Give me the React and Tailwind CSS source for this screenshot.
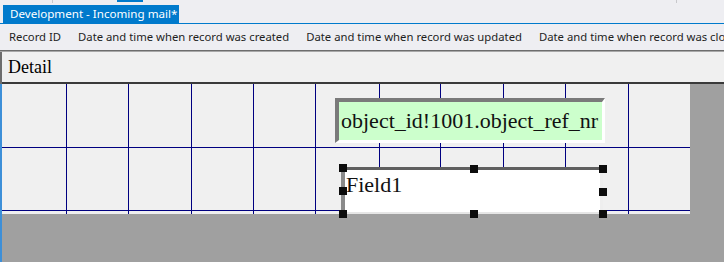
import React from 'react';

const ui = { fontFamily: '"Noto Sans", "Liberation Sans", Arial, sans-serif' };
const serif = { fontFamily: '"Liberation Serif", "Times New Roman", serif' };

const columns = [
    'Record ID',
    'Date and time when record was created',
    'Date and time when record was updated',
    'Date and time when record was closed',
];

const gridX = [64, 126, 189, 251, 313, 377, 438, 501, 563, 626];
const gridY = [63, 126];

// selection handles around Field1, centres in canvas coordinates
const handles = [
    [341, 84], [471.5, 85], [600.5, 84.5],
    [340.5, 107], [600.5, 107.5],
    [341, 130], [471.5, 130], [600.5, 130],
];

const Grid = () => (
    <svg className="absolute inset-0" width="688" height="130">
        {gridX.map((x) => (
            <line key={x} x1={x + 0.5} y1="0" x2={x + 0.5} y2="130" stroke="#000080" strokeWidth="1" />
        ))}
        {gridY.map((y) => (
            <line key={y} x1="0" y1={y + 0.5} x2="688" y2={y + 0.5} stroke="#000080" strokeWidth="1" />
        ))}
    </svg>
);

const App = () => {
    return (
        <div className="w-[724px] h-[262px] overflow-hidden bg-[#eeeef2] flex flex-col" style={ui}>
            {/* clipped row of tabs above */}
            <div className="h-[5px] flex items-start shrink-0">
                <div className="ml-[52px] w-px h-[3px] bg-[#c8c8cc]" />
                <div className="ml-[64px] w-[26px] h-[2px] bg-[#007acc]" />
                <div className="ml-[533px] w-px h-[3px] bg-[#c8c8cc]" />
            </div>

            <div className="h-[18px] flex shrink-0">
                <div className="ml-[3px] w-[176px] bg-[#007acc] text-white text-[11.6px] leading-[18px] pl-[7px] whitespace-nowrap">
                    Development - Incoming mail*
                </div>
            </div>
            <div className="h-px bg-[#007acc] shrink-0" />

            <div className="h-[26px] flex items-center shrink-0 whitespace-nowrap text-[11.3px] text-[#1e1e1e]">
                {columns.map((c, i) => (
                    <React.Fragment key={c}>
                        {i > 0 && <div className="w-px h-[20px] bg-[#cccedb] ml-[8px] mr-[9px]" />}
                        <span className={i === 0 ? 'pl-[9px]' : ''}>{c}</span>
                    </React.Fragment>
                ))}
            </div>
            <div className="h-px bg-[#6d6d6d] shrink-0" />
            <div className="h-px bg-[#a8a8a8] shrink-0" />

            <div className="flex flex-1 min-h-0">
                <div className="w-[2px] flex flex-col shrink-0">
                    <div className="h-[32px] bg-[#6d6d6d]" />
                    <div className="flex-1 bg-[#3d8fd8]" />
                </div>
                <div className="flex-1 flex flex-col bg-[#a0a0a0]">
                    <div className="h-[30px] bg-[#f0f0f0] flex items-center pl-[6px] text-[18px] text-black shrink-0" style={serif}>
                        Detail
                    </div>
                    <div className="h-[2px] bg-[#3a3a3a] shrink-0" />
                    <div className="relative w-[688px] h-[130px] bg-[#f0f0f0] shrink-0">
                        <Grid />

                        <div className="absolute left-[333px] top-[14px] w-[270px] h-[45px] bg-[#ccffcc] border-l-[4px] border-t-[4px] border-r-[3px] border-b-[3px] border-l-[#7a7a7a] border-t-[#7a7a7a] border-r-white border-b-white flex items-center pl-[2px]">
                            <span className="text-[22px] leading-none text-[#111] whitespace-nowrap" style={serif}>
                                object_id!1001.object_ref_nr
                            </span>
                        </div>

                        <div className="absolute left-[339px] top-[83px] w-[262px] h-[47px] bg-white border-l-[4px] border-t-[3px] border-r-[3px] border-b-[2px] border-l-[#8a8a8a] border-t-[#5f5f5f] border-r-[#eeeeee] border-b-[#e6e6e6] pl-[1px] pt-[4px]">
                            <span className="text-[22px] leading-none text-[#111]" style={serif}>
                                Field1
                            </span>
                        </div>

                        {handles.map(([x, y], i) => (
                            <div
                                key={i}
                                className="absolute w-[8px] h-[8px] bg-[#0c0c0c] z-10"
                                style={{ left: x - 4, top: y - 4 }}
                            />
                        ))}
                    </div>
                </div>
            </div>
        </div>
    );
};

export default App;
